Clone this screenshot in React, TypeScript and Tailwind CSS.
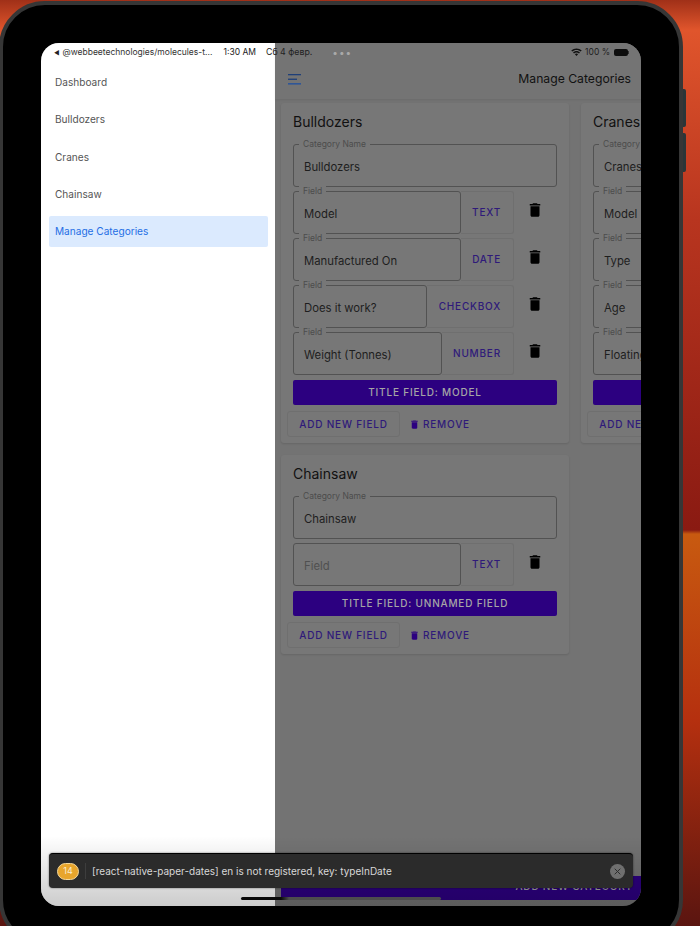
const font = { fontFamily: "Inter, 'Noto Sans', sans-serif" };

type Category = {
  name: string;
  fields: { label: string; type: string; inputWidth: string; placeholder?: boolean }[];
  titleField: string;
};

const columns: Category[][] = [
  [
    {
      name: "Bulldozers",
      titleField: "MODEL",
      fields: [
        { label: "Model", type: "TEXT", inputWidth: "w-[168px]" },
        { label: "Manufactured On", type: "DATE", inputWidth: "w-[168px]" },
        { label: "Does it work?", type: "CHECKBOX", inputWidth: "w-[134px]" },
        { label: "Weight (Tonnes)", type: "NUMBER", inputWidth: "w-[149px]" },
      ],
    },
    {
      name: "Chainsaw",
      titleField: "UNNAMED FIELD",
      fields: [{ label: "Field", type: "TEXT", inputWidth: "w-[168px]", placeholder: true }],
    },
  ],
  [
    {
      name: "Cranes",
      titleField: "MODEL",
      fields: [
        { label: "Model", type: "TEXT", inputWidth: "w-[168px]" },
        { label: "Type", type: "TEXT", inputWidth: "w-[168px]" },
        { label: "Age", type: "NUMBER", inputWidth: "w-[149px]" },
        { label: "Floating", type: "CHECKBOX", inputWidth: "w-[134px]" },
      ],
    },
  ],
];

const drawerItems = ["Dashboard", "Bulldozers", "Cranes", "Chainsaw", "Manage Categories"];

function Trash({ className }: { className: string }) {
  return (
    <svg viewBox="0 0 24 24" className={className} fill="currentColor">
      <path d="M6 19c0 1.1.9 2 2 2h8c1.1 0 2-.9 2-2V7H6v12zM19 4h-3.5l-1-1h-5l-1 1H5v2h14V4z" />
    </svg>
  );
}

function OutlinedInput({
  label,
  value,
  className,
  placeholder,
}: {
  label: string;
  value: string;
  className: string;
  placeholder?: boolean;
}) {
  return (
    <div
      className={`relative flex shrink-0 items-center rounded-[3px] border-[1.5px] border-[#525252] pl-[10px] pt-[3px] text-[11.3px] ${className}`}
    >
      {!placeholder && (
        <span className="absolute -top-[6px] left-[5px] bg-[#777777] px-[4px] text-[8.5px] leading-[10px] text-[#4c4c4c]">
          {label}
        </span>
      )}
      <span className={placeholder ? "text-[#505050]" : "text-[#1e1e1e]"}>{value}</span>
    </div>
  );
}

function CategoryCard({ category }: { category: Category }) {
  return (
    <div className="w-[288px] shrink-0 rounded-[3px] bg-[#777777] px-[12px] pt-[10px] pb-[6px] shadow-[0_1px_2px_rgba(0,0,0,0.12)]">
      <div className="mb-[13px] text-[14px] leading-[18px] text-[#111111]">{category.name}</div>
      <OutlinedInput label="Category Name" value={category.name} className="h-[43px] w-full" />
      <div className="mt-[4px] flex flex-col gap-[4px]">
        {category.fields.map((field) => (
          <div key={field.label} className="flex h-[43px] items-stretch">
            <OutlinedInput
              label="Field"
              value={field.label}
              placeholder={field.placeholder}
              className={field.inputWidth}
            />
            <div className="flex flex-1 items-center justify-end rounded-r-[3px] border border-l-0 border-[#6f6f6f] pr-[12px] text-[10px] font-medium tracking-[0.8px] text-[#2f1a7a]">
              {field.type}
            </div>
            <div className="flex w-[43px] items-start justify-center pr-[2px] pt-[10px] text-black">
              <Trash className="h-[18px] w-[18px]" />
            </div>
          </div>
        ))}
      </div>
      <div className="mt-[5px] flex h-[25px] items-center justify-center rounded-[2px] bg-[#2c0080] text-[10px] font-medium tracking-[0.8px] text-[#a6a6a6]">
        TITLE FIELD: {category.titleField}
      </div>
      <div className="-ml-[6px] mt-[6px] flex items-center">
        <div className="flex h-[26px] w-[113px] items-center justify-center rounded-[3px] border border-[#6f6f6f] text-[10px] font-medium tracking-[0.8px] text-[#2f1a7a]">
          ADD NEW FIELD
        </div>
        <div className="ml-[9px] flex items-center text-[10px] font-medium tracking-[0.8px] text-[#2f1a7a]">
          <Trash className="mr-[3px] h-[11px] w-[11px] text-[#2c0080]" />
          REMOVE
        </div>
      </div>
    </div>
  );
}

function StatusBar() {
  return (
    <div className="absolute inset-x-0 top-0 flex h-[18px] items-center pl-[13px] pr-[12px] text-[8.5px] text-[#222222]">
      <span className="mr-[3px] text-[6px]">◀</span>
      <span className="w-[161px] text-[#333333]">@webbeetechnologies/molecules-t...</span>
      <span>1:30 AM</span>
      <span className="ml-[10px] text-[8.8px]">Сб 4 февр.</span>
      <span className="ml-[20px] text-[10px] tracking-[1px] text-[#a9a9a9]">•••</span>
      <div className="ml-auto flex items-center gap-[3px]">
        <svg viewBox="0 0 16 12" className="h-[9px] w-[11px]" fill="#111111">
          <path d="M8 2.2c2.4 0 4.6.9 6.2 2.5L15.6 3.2C13.6 1.2 10.9 0 8 0S2.4 1.2.4 3.2l1.4 1.5C3.4 3.1 5.6 2.2 8 2.2zM8 6c1.4 0 2.6.5 3.6 1.4L13 5.9C11.7 4.6 9.9 3.8 8 3.8s-3.7.8-5 2.1l1.4 1.5C5.4 6.5 6.6 6 8 6zM8 7.6c-.9 0-1.7.4-2.3.9L8 11l2.3-2.5C9.7 8 8.9 7.6 8 7.6z" />
        </svg>
        <span className="text-[#1f1f1f]">100 %</span>
        <div className="ml-[1px] flex items-center">
          <div className="h-[7px] w-[14px] rounded-[2px] bg-[#0d0d0d]" />
          <div className="h-[3px] w-[1px] bg-[#333333]" />
        </div>
      </div>
    </div>
  );
}

export default function App() {
  return (
    <div
      className="h-[926px] w-[700px] overflow-hidden bg-[linear-gradient(180deg,#a03018_0px,#e0552c_30px,#b8351f_220px,#8a1a12_530px,#c85a10_534px,#b5300f_720px,#5a1510_926px)]"
      style={font}
    >
      <div className="relative -ml-[1px] mt-[1px] h-[945px] w-[684px] rounded-[46px] border-[4px] border-[#363636] bg-black pl-[38px] pt-[38px]">
        <div className="absolute -right-[7px] top-[84px] h-[38px] w-[3px] rounded-r-[2px] bg-[#2b3538]" />
        <div className="absolute -right-[7px] top-[128px] h-[39px] w-[3px] rounded-r-[2px] bg-[#2b3538]" />
        <div className="relative flex h-[863px] w-[600px] overflow-hidden rounded-[18px] bg-[#737373]">
          <aside className="flex w-[234px] shrink-0 flex-col gap-[6px] bg-white pl-[8px] pr-[7px] pt-[24px]">
            {drawerItems.map((item) => {
              const active = item === "Manage Categories";
              return (
                <div
                  key={item}
                  className={`flex h-[31.3px] items-center rounded-[2px] px-[6px] text-[10.1px] ${
                    active ? "bg-[#dbeafe] text-[#1f6fe5]" : "text-[#555555]"
                  }`}
                >
                  {item}
                </div>
              );
            })}
          </aside>

          <main className="flex min-w-0 flex-1 flex-col">
            <header className="flex h-[56px] shrink-0 items-center justify-between bg-[#747474] pl-[13px] pr-[10px] pt-[16px] shadow-[0_1px_2px_rgba(0,0,0,0.08)]">
              <svg viewBox="0 0 14 11" className="h-[11px] w-[14px]">
                <rect x="0" y="0" width="13" height="1.3" fill="#1f3f78" />
                <rect x="0" y="4.6" width="9" height="1.3" fill="#1f3f78" />
                <rect x="0" y="9.2" width="13" height="1.3" fill="#1f4fa0" />
              </svg>
              <span className="text-[12.2px] text-[#111111]">Manage Categories</span>
            </header>
            <div className="flex flex-1 gap-[12px] overflow-hidden pl-[6px] pt-[4px]">
              {columns.map((column, i) => (
                <div key={i} className="flex flex-col gap-[12px]">
                  {column.map((category) => (
                    <CategoryCard key={category.name} category={category} />
                  ))}
                </div>
              ))}
            </div>
            <div className="mb-[6px] ml-[6px] flex h-[24px] shrink-0 items-end justify-end bg-[#2c0080] pb-[6px] pr-[8px] text-[10px] font-medium tracking-[0.8px] text-[#a6a6a6]">
              ADD NEW CATEGORY
            </div>
          </main>

          <StatusBar />

          <div className="absolute inset-x-0 bottom-0 h-[70px] bg-gradient-to-b from-transparent to-black/20" />

          <div className="absolute bottom-[18px] left-[8px] right-[8px] flex h-[35px] items-center rounded-[4px] border-t border-black bg-[#2b2b2b] pl-[8px] pr-[8px] shadow-[0_0_2px_rgba(0,0,0,0.6)]">
            <div className="flex h-[17px] w-[22px] items-center justify-center rounded-full border border-[#f3d79a] bg-[#e8a52c] text-[9px] text-[#fbeccc]">
              14
            </div>
            <div className="mx-[6px] h-[16px] w-px bg-[#3d3d3d]" />
            <span className="text-[10px] text-[#d8d8d8]">
              [react-native-paper-dates] en is not registered, key: typeInDate
            </span>
            <div className="ml-auto flex h-[15px] w-[15px] items-center justify-center rounded-full bg-[#6f6f6f] text-[#2b2b2b]">
              <svg viewBox="0 0 10 10" className="h-[7px] w-[7px]" stroke="currentColor" strokeWidth="1.4">
                <path d="M1 1l8 8M9 1l-8 8" />
              </svg>
            </div>
          </div>

          <div className="absolute bottom-[6px] left-[200px] h-[3px] w-[200px] rounded-full bg-[linear-gradient(90deg,#0a0a0a_0%,#0a0a0a_20%,#4d4d4d_24%,#4d4d4d_100%)]" />
        </div>
      </div>
    </div>
  );
}
